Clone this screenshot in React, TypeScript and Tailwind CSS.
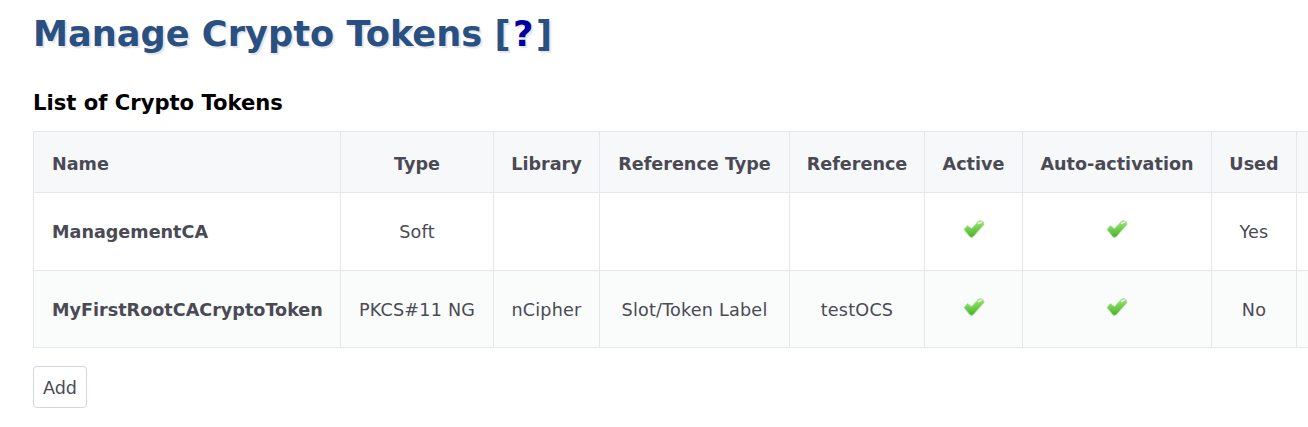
const font = { fontFamily: '"DejaVu Sans", sans-serif' };

const Check = () => (
  <svg width="22" height="20" viewBox="0 0 22 20" className="inline-block align-top">
    <defs>
      <linearGradient id="chk" x1="0" y1="0" x2="0.15" y2="1">
        <stop offset="0" stopColor="#b5e89a" />
        <stop offset="0.5" stopColor="#74d44c" />
        <stop offset="1" stopColor="#4cb130" />
      </linearGradient>
    </defs>
    <path
      d="M1 10.5 L4.5 6.5 L8.5 9.5 L15.5 2 Q18 0.5 20.5 3 L21 5.5 L10.5 17.5 Q8.5 19.5 6.5 17.5 Z"
      fill="url(#chk)"
      stroke="#b9dcae"
      strokeWidth="0.8"
      strokeLinejoin="round"
    />
    <path d="M15.5 4.5 L18.5 3" stroke="#e4f7d8" strokeWidth="1.4" strokeLinecap="round" fill="none" />
  </svg>
);

interface Token {
  name: string;
  type: string;
  library: string;
  refType: string;
  reference: string;
  used: string;
}

const tokens: Token[] = [
  { name: 'ManagementCA', type: 'Soft', library: '', refType: '', reference: '', used: 'Yes' },
  { name: 'MyFirstRootCACryptoToken', type: 'PKCS#11 NG', library: 'nCipher', refType: 'Slot/Token Label', reference: 'testOCS', used: 'No' },
];

const th = 'border border-[#e5e7eb] px-[10px] pt-[4px] h-[61px] text-center font-bold text-[#4a4a55] whitespace-nowrap';
const td = 'border border-[#e5e7eb] px-[10px] pt-[2px] text-center whitespace-nowrap';
const tdText = td + ' tracking-[0.2px]';

export default function App() {
  return (
    <div className="w-[1308px] h-[427px] overflow-hidden bg-white text-[#4a4a55]" style={font}>
      <div className="w-[1500px] pl-[33px] pt-[12px]">
        <h1 className="text-[35.2px] leading-[44px] font-bold text-[#2a5082] [text-shadow:2px_2px_1px_#e2e5ea]">
          Manage Crypto Tokens <span className="tracking-[2.5px]">[<span className="text-[#0000a0]">?</span>]</span>
        </h1>
        <h2 className="mt-[33px] text-[21.12px] leading-[28px] font-bold text-black">List of Crypto Tokens</h2>
        <table className="mt-[14px] border-collapse text-[17.6px] table-fixed w-[1364px]">
          <thead>
            <tr className="bg-[#f7f8fa]">
              <th className={th + ' !text-left !pl-[18px] w-[307px]'}>Name</th>
              <th className={th + ' w-[153px]'}>Type</th>
              <th className={th + ' w-[106px]'}>Library</th>
              <th className={th + ' w-[190px]'}>Reference Type</th>
              <th className={th + ' w-[135px]'}>Reference</th>
              <th className={th + ' w-[98px]'}>Active</th>
              <th className={th + ' w-[189px]'}>Auto-activation</th>
              <th className={th + ' w-[85px]'}>Used</th>
              <th className={th + ' w-[100px]'}></th>
            </tr>
          </thead>
          <tbody>
            {tokens.map((t, i) => (
              <tr key={t.name} className={i === 1 ? 'h-[77px] bg-[#fafbfb]' : 'h-[78px]'}>
                <td className={td + ' !text-left !pl-[18px] font-bold'}>{t.name}</td>
                <td className={tdText}>{t.type}</td>
                <td className={tdText}>{t.library}</td>
                <td className={tdText}>{t.refType}</td>
                <td className={tdText}>{t.reference}</td>
                <td className={td}><Check /></td>
                <td className={td}><Check /></td>
                <td className={tdText}>{t.used}</td>
                <td className={td}></td>
              </tr>
            ))}
          </tbody>
        </table>
        <button className="mt-[18px] block h-[42px] w-[54px] rounded-[4px] border border-[#d0d6de] bg-white pt-[2px] text-[17.6px] text-[#4a4a55]">
          Add
        </button>
      </div>
    </div>
  );
}
